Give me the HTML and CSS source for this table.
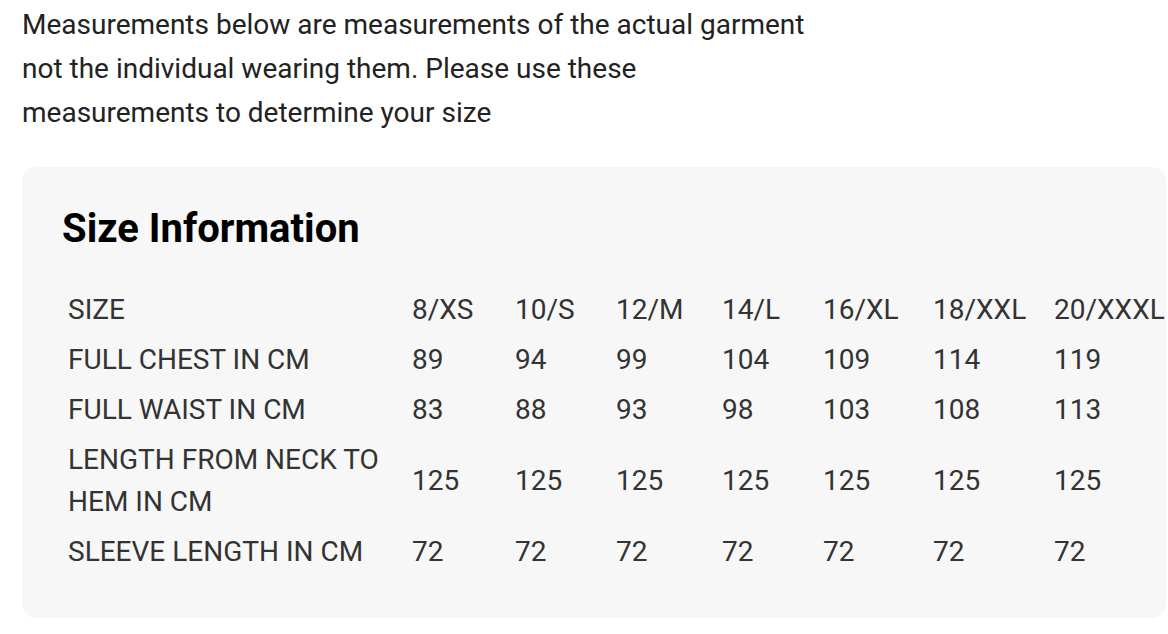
FILE: index.html
```html
<!DOCTYPE html>
<html lang="en">
<head>
<meta charset="utf-8">
<link rel="stylesheet" href="styles.css">
</head>
<body>
<div class="page">
  <p class="intro">Measurements below are measurements of the actual garment<br>not the individual wearing them. Please use these<br>measurements to determine your size</p>
  <section class="card">
    <h2 class="title">Size Information</h2>
    <table class="sizes">
      <colgroup>
        <col class="c-label">
        <col class="c1"><col class="c2"><col class="c3"><col class="c4"><col class="c5"><col class="c6"><col class="c7">
      </colgroup>
      <tbody>
        <tr><td>SIZE</td><td>8/XS</td><td>10/S</td><td>12/M</td><td>14/L</td><td>16/XL</td><td>18/XXL</td><td>20/XXXL</td></tr>
        <tr><td>FULL CHEST IN CM</td><td>89</td><td>94</td><td>99</td><td>104</td><td>109</td><td>114</td><td>119</td></tr>
        <tr><td>FULL WAIST IN CM</td><td>83</td><td>88</td><td>93</td><td>98</td><td>103</td><td>108</td><td>113</td></tr>
        <tr><td>LENGTH FROM NECK TO<br>HEM IN CM</td><td>125</td><td>125</td><td>125</td><td>125</td><td>125</td><td>125</td><td>125</td></tr>
        <tr><td>SLEEVE LENGTH IN CM</td><td>72</td><td>72</td><td>72</td><td>72</td><td>72</td><td>72</td><td>72</td></tr>
      </tbody>
    </table>
  </section>
</div>
</body>
</html>
```
FILE: styles.css
```css
html, body {
  margin: 0;
  padding: 0;
  background: #ffffff;
}
body {
  font-family: Roboto, "Liberation Sans", sans-serif;
  overflow: hidden;
}
.page {
  padding: 3px 2px 0 22px;
}
.intro {
  margin: 0;
  font-size: 28px;
  line-height: 44px;
  color: #222222;
}
.card {
  margin-top: 32px;
  background: #f7f7f7;
  border-radius: 14px;
  padding: 40px 0 41px 40px;
}
.title {
  margin: 0 0 34px 0;
  font-size: 40px;
  line-height: 44px;
  font-weight: 700;
  color: #000000;
}
.sizes {
  border-collapse: collapse;
  table-layout: fixed;
  width: 1107px;
  font-size: 28px;
  line-height: 42px;
  color: #333333;
}
.sizes td {
  padding: 4px 6px;
  vertical-align: middle;
  white-space: nowrap;
}
.c-label { width: 344px; }
.c1 { width: 103px; }
.c2 { width: 101px; }
.c3 { width: 106px; }
.c4 { width: 101px; }
.c5 { width: 110px; }
.c6 { width: 121px; }
.c7 { width: 121px; }
```
